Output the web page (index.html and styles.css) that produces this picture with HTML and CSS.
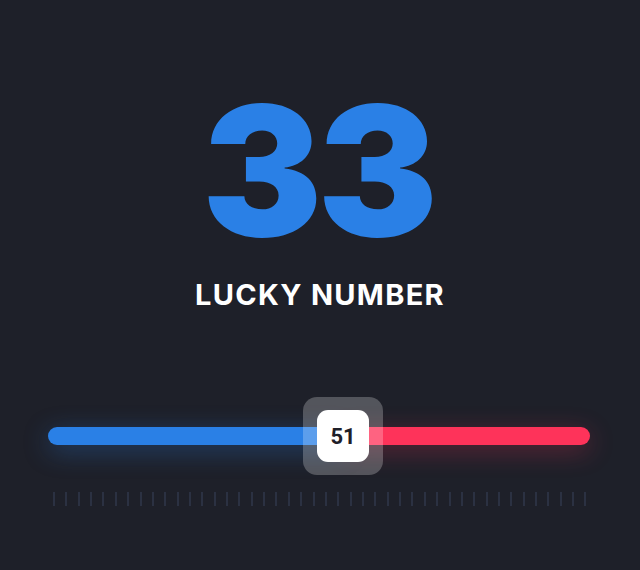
FILE: index.html
```html
<!DOCTYPE html>
<html>
<head>
<meta charset="utf-8">
<link rel="stylesheet" href="styles.css">
</head>
<body>
<main class="app">
  <div class="value">33</div>
  <div class="label">LUCKY NUMBER</div>
  <div class="slider">
    <div class="track">
      <div class="fill fill-low" style="flex-basis:295px"></div>
      <div class="fill fill-high"></div>
    </div>
    <div class="thumb" style="left:295px"><div class="knob">51</div></div>
  </div>
  <div class="ticks">
    <span></span><span></span><span></span><span></span><span></span><span></span><span></span><span></span><span></span><span></span><span></span>
    <span></span><span></span><span></span><span></span><span></span><span></span><span></span><span></span><span></span><span></span><span></span>
    <span></span><span></span><span></span><span></span><span></span><span></span><span></span><span></span><span></span><span></span><span></span>
    <span></span><span></span><span></span><span></span><span></span><span></span><span></span><span></span><span></span><span></span><span></span>
  </div>
</main>
</body>
</html>
```

FILE: styles.css
```css
html, body {
  margin: 0;
  padding: 0;
  background: #1e2029;
  height: 100%;
}
.app {
  display: flex;
  flex-direction: column;
  align-items: center;
  width: 640px;
  height: 570px;
  padding-top: 101px;
  box-sizing: border-box;
  font-family: Inter, "Noto Sans", sans-serif;
}
.value {
  font-size: 180px;
  font-weight: 900;
  line-height: 140px;
  color: #2a80e6;
  letter-spacing: -5px;
  text-indent: -5px;
}
.label {
  margin-top: 37px;
  font-size: 29px;
  font-weight: 700;
  line-height: 34px;
  color: #ffffff;
  letter-spacing: 1.3px;
}
.slider {
  position: relative;
  align-self: flex-start;
  margin: 115px 0 0 48px;
  width: 542px;
  height: 18px;
}
.track {
  display: flex;
  height: 18px;
}
.fill {
  height: 18px;
}
.fill-low {
  flex-shrink: 0;
  background: #2a80e6;
  border-radius: 9px 0 0 9px;
  box-shadow: 0 6px 26px rgba(42, 128, 230, 0.35);
}
.fill-high {
  flex: 1;
  background: #fe335a;
  border-radius: 0 9px 9px 0;
  box-shadow: 0 6px 26px rgba(254, 51, 90, 0.3);
}
.thumb {
  position: absolute;
  top: 50%;
  width: 80px;
  height: 78px;
  transform: translate(-50%, -50%);
  border-radius: 14px;
  background: rgba(255, 255, 255, 0.24);
  display: flex;
  align-items: center;
  justify-content: center;
}
.knob {
  width: 52px;
  height: 52px;
  border-radius: 11px;
  background: #ffffff;
  display: flex;
  align-items: center;
  justify-content: center;
  font-family: Roboto, Inter, sans-serif;
  font-weight: 700;
  font-size: 22px;
  color: #1e2029;
}
.ticks {
  align-self: flex-start;
  margin: 47px 0 0 53px;
  width: 534px;
  height: 14px;
  display: flex;
  justify-content: space-between;
}
.ticks span {
  width: 2px;
  height: 14px;
  background: #2b3142;
}
```
